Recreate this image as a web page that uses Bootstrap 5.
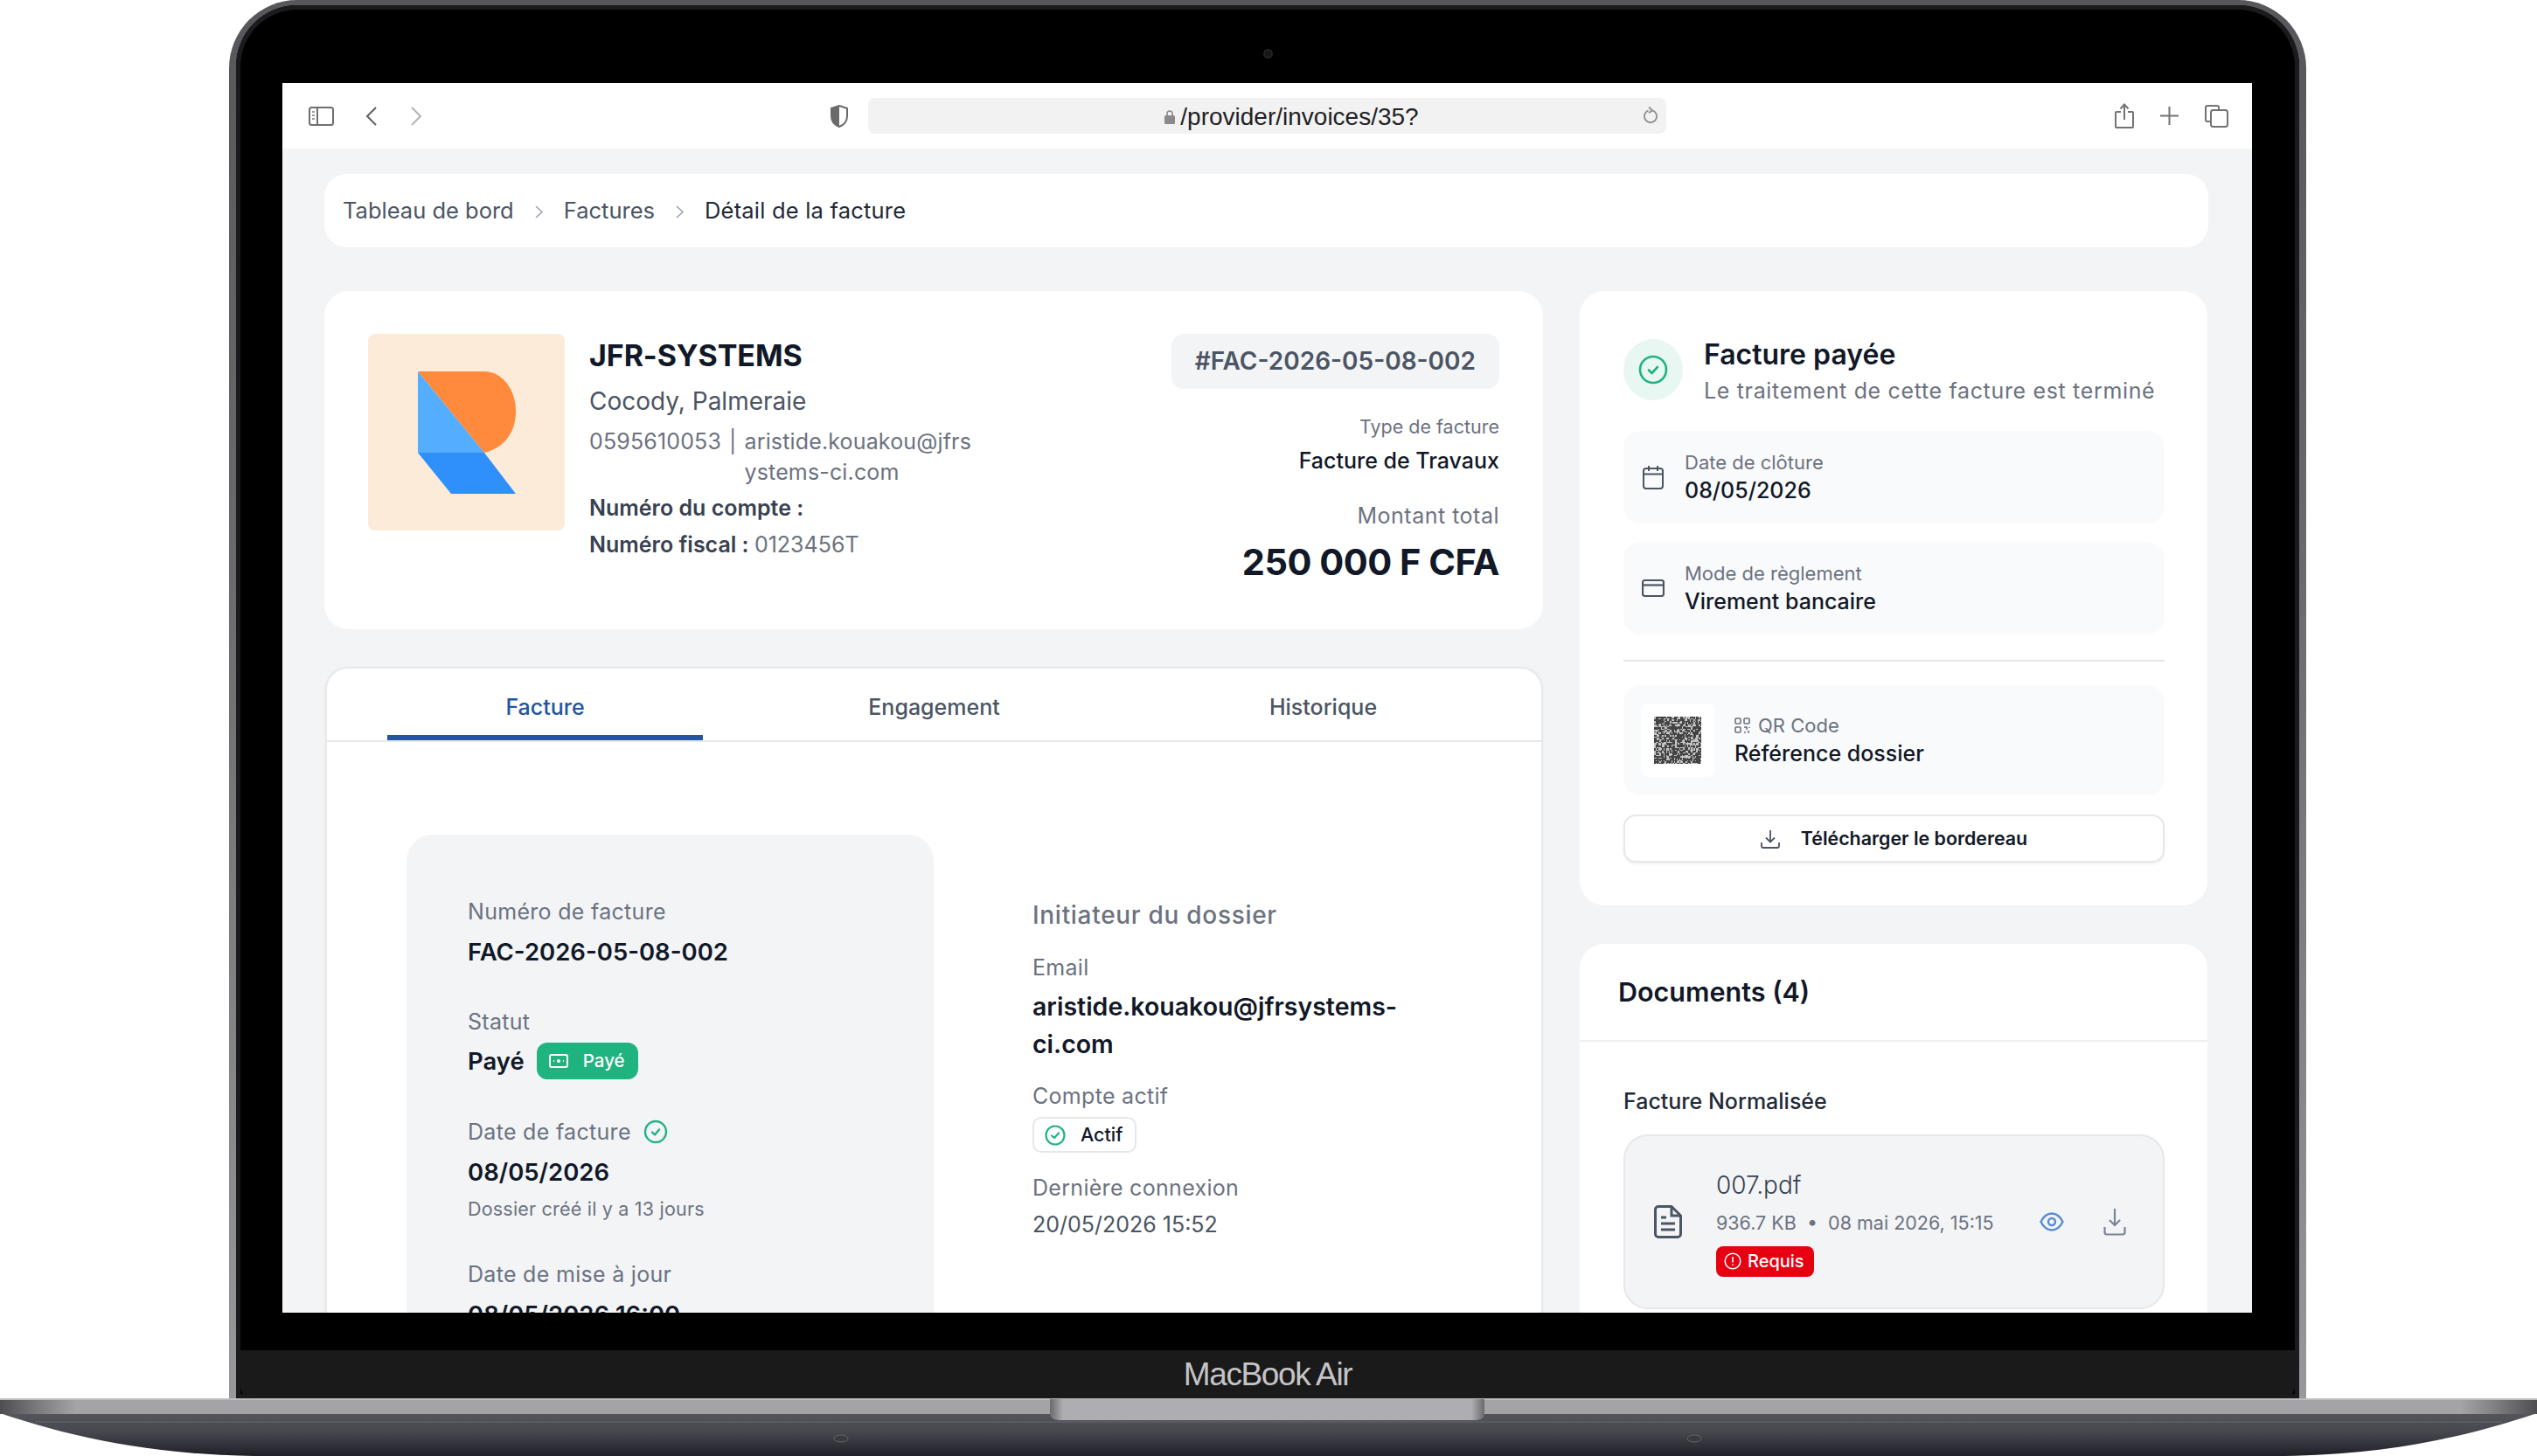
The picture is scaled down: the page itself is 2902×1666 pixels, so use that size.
<!DOCTYPE html>
<html lang="fr">
<head>
<meta charset="utf-8">
<title>Détail de la facture</title>
<link href="https://cdn.jsdelivr.net/npm/bootstrap@5.3.0/dist/css/bootstrap.min.css" rel="stylesheet">
<style>
html,body{margin:0;background:#fff;width:2902px;height:1666px;overflow:hidden}
body{font-family:Inter,"Noto Sans",sans-serif;color:#111827}
svg{display:block;flex:none}
.lid{width:2376px;height:1600px;margin:0 0 0 262px;padding:6px 8px 0;border-radius:78px 78px 0 0;background:linear-gradient(#57575b 0,#6a6a6e 40%,#98989c 100%)}
.lid-in{position:relative;height:1594px;padding:89px 54px 0 53px;border-radius:70px 70px 0 0;background:#000;box-shadow:inset 0 0 0 5px #1b1b1d}
.cam{position:absolute;left:1175px;top:50px;width:11px;height:11px;border-radius:50%;background:#161618;border:2px solid #232326}
.screen{height:1407px;overflow:hidden;background:#f3f4f6}
.bezel{height:43px;background:#000}
.chin{height:55px;margin:0 -49px 0 -48px;background:#1a1a1a;border-radius:0 0 14px 14px;text-align:center;font:37px/56px "Liberation Sans",sans-serif;letter-spacing:-1.4px;color:#c4c4c6}
.base{height:66px}
.tool{height:75px;background:#fff}
.t-left{width:626px;padding-left:30px;gap:36px}
.t-mid{width:957px;gap:22px}
.t-right{width:670px;padding-right:27px;gap:30px}
.url{width:913px;height:41px;padding-left:56px;padding-top:2px;border-radius:8px;background:#f2f2f3;font:28px/41px "Liberation Sans",sans-serif;color:#222;position:relative;gap:6px}
.url svg.rl{position:absolute;right:10px;top:10px}
.pg{padding:29px 50px 0 48px}
.crumb{height:84px;margin-bottom:50px;padding:2px 21px 0;border-radius:26px;background:#fff;border:0;box-shadow:none;font-size:25.5px}
.crumb .breadcrumb{--bs-breadcrumb-margin-bottom:0;--bs-breadcrumb-item-padding-x:23px;--bs-breadcrumb-divider:url("data:image/svg+xml,%3Csvg xmlns='http://www.w3.org/2000/svg' width='11' height='17'%3E%3Cpath d='M2 2l7 6.5L2 15' fill='none' stroke='%239ca3af' stroke-width='1.6'/%3E%3C/svg%3E")}
.crumb a{color:#4b5563;text-decoration:none}
.crumb .active{color:#1f2937;letter-spacing:.2px}
.crumb .breadcrumb-item::before{padding-top:1px}
.cols{gap:42px;align-items:flex-start}
.c-l{width:1394px;flex:none}
.c-r{width:718px;flex:none}
.box{background:#fff;border:0;border-radius:28px}
.hd{height:387px;margin-bottom:43px;padding:49px 50px 0 50px;gap:28px}
.logo{width:225px;height:225px;border-radius:8px;background:#fdebd9;flex:none}
.co{flex:1}
.co-n{font-size:34px;line-height:50px;font-weight:700;color:#111827;letter-spacing:-.1px}
.co-a{font-size:28px;line-height:40px;margin-top:7px;color:#4b5563}
.co-c{font-size:25px;line-height:35px;margin-top:9px;margin-bottom:2px;color:#6b7280;gap:9px;letter-spacing:.15px}
.co-f{font-size:25px;line-height:42px;color:#374151;font-weight:600}
.co-f span{font-weight:400;color:#6b7280}
.ref{display:inline-block;height:63px;padding:0 27px;border-radius:14px;background:#f3f4f6;font-size:28px;line-height:63px;font-weight:600;color:#4b5563}
.k1{font-size:21.500px;line-height:30px;margin-top:28px;color:#6b7280}
.v1{font-size:25px;line-height:30px;margin-top:9px;font-weight:500;color:#111827}
.k2{font-size:25px;line-height:30px;margin-top:33px;color:#6b7280;letter-spacing:.5px}
.amt{font-size:41.500px;line-height:50px;margin-top:13px;font-weight:700;color:#111827;letter-spacing:-.5px}
.tabs-box{margin-left:1px;border:2px solid #e7e9ed;border-bottom:0;border-radius:26px 26px 0 0;height:800px;box-shadow:0 0 3px rgba(0,0,0,.05)}
.tb{height:84px;padding:0 69px;gap:84px;border-bottom:2px solid #e5e7eb;--bs-nav-link-padding-x:0;--bs-nav-link-padding-y:0}
.tb .nav-item{width:361px}
.tb .nav-link{height:82px;line-height:88px;padding:0;text-align:center;font-size:25px;font-weight:500;color:#4b5563;border-bottom:6px solid transparent}
.tb .nav-link.active{color:#2355a0;border-bottom-color:#2355a0;font-weight:500}
.tc{padding:106px 0 0 91px;gap:113px}
.pan{width:603px;height:700px;flex:none;padding:71px 0 0 70px;border-radius:30px;background:#f3f4f6}
.k{font-size:25px;line-height:34px;color:#6b7280;letter-spacing:.3px}
.v{font-size:27.500px;line-height:40px;font-weight:600;color:#111827;margin-top:9px}
.mt43{margin-top:43px}
.pay{height:42px;padding:0 15px 0 14px;border-radius:12px;background:#1fb380;color:#fff;font-size:20.500px;font-weight:500;gap:17px}
.pay-row{margin-top:7px;gap:14px}
.note{font-size:21.500px;line-height:30px;margin-top:7px;color:#6b7280;letter-spacing:.2px}
.ini{flex:1;padding-top:72px}
.ini-t{font-size:28px;line-height:40px;font-weight:500;color:#6b7280;margin-bottom:23px;letter-spacing:.7px}
.em{width:480px;font-size:28.500px;line-height:43px;font-weight:600;color:#111827;margin:6px 0 21px}
.act{display:inline-flex;height:41px;padding:0 14px 0 12px;gap:17px;border:2px solid #e5e7eb;border-radius:10px;background:#fff;color:#111827;font-size:21.500px;font-weight:500;align-items:center;margin:7px 0 23px}
.lc{font-size:25px;line-height:34px;color:#4b5563;margin-top:8px}
.st{padding:55px 49px 49px 50px;margin-bottom:44px}
.st-top{gap:24px;margin-bottom:28px}
.circ{width:68px;height:70px;border-radius:50%;background:#e8f7f1;flex:none}
.st-t{font-size:32px;line-height:36px;font-weight:600;color:#111827}
.st-s{font-size:25px;line-height:36px;margin-top:5px;color:#6b7280;white-space:nowrap;letter-spacing:.66px}
.inf{height:106px;border-radius:20px;background:#f9fafb;padding-left:20px;gap:22px}
.inf-a{margin-bottom:21px}
.ico-w{width:28px;display:flex;justify-content:center}
.il{font-size:22px;line-height:30px;color:#6b7280}
.il-q{gap:9px}
.iv{font-size:25px;line-height:34px;font-weight:500;color:#111827}
.sep{height:2px;margin:29px 0 27px;background:#e5e7eb;opacity:1;border:0}
.qr-b{height:126px;border-radius:20px;background:#f9fafb;padding-left:20px;gap:23px}
.qr-w{width:84px;height:84px;border-radius:8px;background:#fff;flex:none}
.dl{height:55px;width:100%;margin-top:22px;border:2px solid #e5e7eb;border-radius:14px;background:#fff;box-shadow:0 2px 3px rgba(0,0,0,.06);font-size:21.400px;font-weight:600;color:#111827;gap:24px}
.dc-h{height:112px;padding:0 0 0 44px;font-size:30.500px;font-weight:600;color:#111827;border-bottom:2px solid #eceef1;background:transparent;border-radius:28px 28px 0 0}
.dc-b{padding:51px 49px 0 50px;height:400px}
.dc-l{font-size:25px;line-height:34px;font-weight:500;color:#1f2937;margin-bottom:21px}
.doc{height:200px;padding:0 42px 0 33px;border:2px solid #e5e7eb;border-radius:28px;background:#f3f4f6}
.doc-i{margin-right:39px}
.doc-n{font-size:28px;line-height:40px;color:#374151;font-weight:300}
.doc-m{font-size:21.500px;line-height:30px;margin-top:8px;color:#6b7280;white-space:nowrap}
.doc-a{gap:45px}
.req{display:inline-flex;height:35px;margin-top:12px;padding:0 11px 0 9px;gap:7px;border-radius:8px;background:#e60012;color:#fff;font-size:20px;font-weight:500;align-items:center}
.gap-bk{gap:36px}
.fw-chev{margin-left:3px}
.dt-k{gap:14px}
</style>
</head>
<body>
<div class="lid">
  <div class="lid-in">
    <div class="cam"></div>
    <div class="screen">
      <div class="tool d-flex align-items-center">
        <div class="t-left d-flex align-items-center">
          <div class="d-flex align-items-center gap-bk">
            <svg width="29" height="22" viewBox="0 0 29 22" fill="none" stroke="#6f6f72" stroke-width="2"><rect x="1" y="1" width="27" height="20" rx="2.500"/><path d="M10 1v20"/><path d="M4 6h3M4 10h3M4 14h3" stroke="#9a9a9c"/></svg>
            <svg width="13" height="22" viewBox="0 0 13 22" fill="none" stroke="#5f5f62" stroke-width="2"><path d="M12 1L2 11l10 10"/></svg>
          </div>
          <svg class="fw-chev" width="13" height="22" viewBox="0 0 13 22" fill="none" stroke="#b4b4b6" stroke-width="2"><path d="M1 1l10 10L1 21"/></svg>
        </div>
        <div class="t-mid d-flex align-items-center">
          <svg width="22" height="26" viewBox="0 0 22 26"><path d="M11 1l9 3v9c0 6-4 10-9 12C6 23 2 19 2 13V4z" fill="#fff" stroke="#6b6b6e" stroke-width="2"/><path d="M11 1L2 4v9c0 6 4 10 9 12z" fill="#6b6b6e"/></svg>
          <div class="url d-flex align-items-center justify-content-center">
            <svg width="12" height="17" viewBox="0 0 12 17"><path d="M3 7V5a3 3 0 016 0v2" fill="none" stroke="#8a8a8c" stroke-width="1.600"/><rect y="7" width="12" height="10" rx="1.500" fill="#8a8a8c"/></svg>
            <span>/provider/invoices/35?</span>
            <svg class="rl" width="16" height="20" viewBox="0 0 16 20" fill="none" stroke="#8d8d90" stroke-width="1.800"><path d="M5.500 4.500a7 7 0 105 0"/><path d="M6 0.500l4 3.800-4 3"/></svg>
          </div>
        </div>
        <div class="t-right d-flex align-items-center justify-content-end">
          <svg width="22" height="29" viewBox="0 0 22 29" fill="none" stroke="#737376" stroke-width="2"><path d="M7 10H2a1 1 0 00-1 1v16a1 1 0 001 1h18a1 1 0 001-1V11a1 1 0 00-1-1h-5"/><path d="M11 19V2M6.500 6.500L11 1.500l4.500 5"/></svg>
          <svg width="21" height="21" viewBox="0 0 21 21" stroke="#737376" stroke-width="2"><path d="M10.500 0v21M0 10.500h21"/></svg>
          <svg width="27" height="26" viewBox="0 0 27 26" fill="none" stroke="#737376" stroke-width="2"><path d="M6 19H3a2 2 0 01-2-2V3a2 2 0 012-2h11a2 2 0 012 2v3"/><rect x="7" y="6" width="19" height="19" rx="2.500"/></svg>
        </div>
      </div>
      <div class="pg">
        <nav class="crumb d-flex align-items-center" aria-label="breadcrumb">
          <ol class="breadcrumb">
            <li class="breadcrumb-item"><a href="#">Tableau de bord</a></li>
            <li class="breadcrumb-item"><a href="#">Factures</a></li>
            <li class="breadcrumb-item active" aria-current="page">Détail de la facture</li>
          </ol>
        </nav>
        <div class="cols d-flex">
          <div class="c-l">
            <div class="card box hd flex-row">
              <div class="logo d-flex align-items-center justify-content-center">
                <svg width="112" height="140" viewBox="0 0 112 140"><path d="M0 0h76c20 0 36 20 36 46 0 24-14 42-36 47z" fill="#ff8a3c"/><path d="M0 0l76 93H0z" fill="#55adff"/><path d="M0 93h76l36 47H38z" fill="#2f8ffb"/></svg>
              </div>
              <div class="co">
                <div class="co-n">JFR-SYSTEMS</div>
                <div class="co-a">Cocody, Palmeraie</div>
                <div class="co-c d-flex"><span>0595610053</span><span>|</span><span>aristide.kouakou@jfrs<br>ystems-ci.com</span></div>
                <div class="co-f">Numéro du compte :</div>
                <div class="co-f">Numéro fiscal : <span>0123456T</span></div>
              </div>
              <div class="text-end">
                <div class="ref">#FAC-2026-05-08-002</div>
                <div class="k1">Type de facture</div>
                <div class="v1">Facture de Travaux</div>
                <div class="k2">Montant total</div>
                <div class="amt">250 000 F CFA</div>
              </div>
            </div>
            <div class="card box tabs-box">
              <ul class="nav tb flex-nowrap">
                <li class="nav-item"><a class="nav-link active" href="#">Facture</a></li>
                <li class="nav-item"><a class="nav-link" href="#">Engagement</a></li>
                <li class="nav-item"><a class="nav-link" href="#">Historique</a></li>
              </ul>
              <div class="tc d-flex">
                <div class="pan">
                  <div class="k">Numéro de facture</div>
                  <div class="v">FAC-2026-05-08-002</div>
                  <div class="k mt43">Statut</div>
                  <div class="d-flex align-items-center pay-row">
                    <span class="v m-0">Payé</span>
                    <span class="badge pay d-inline-flex align-items-center">
                      <svg width="22" height="18" viewBox="0 0 22 18" fill="none" stroke="#fff" stroke-width="2"><rect x="1" y="2" width="20" height="14" rx="2"/><circle cx="11" cy="9" r="2" fill="#fff" stroke="none"/><path d="M5 9h1M16 9h1"/></svg>
                      Payé
                    </span>
                  </div>
                  <div class="k mt43 d-flex align-items-center dt-k">Date de facture
                    <svg width="28" height="28" viewBox="0 0 28 28" fill="none" stroke="#1fb380" stroke-width="2.400"><circle cx="14" cy="14" r="12"/><path d="M10 14.500l3 3 5-6" stroke-linecap="round" stroke-linejoin="round"/></svg>
                  </div>
                  <div class="v">08/05/2026</div>
                  <div class="note">Dossier créé il y a 13 jours</div>
                  <div class="k mt43">Date de mise à jour</div>
                  <div class="v">08/05/2026 16:00</div>
                </div>
                <div class="ini">
                  <div class="ini-t">Initiateur du dossier</div>
                  <div class="k">Email</div>
                  <div class="em">aristide.kouakou@jfrsystems-ci.com</div>
                  <div class="k">Compte actif</div>
                  <div class="act">
                    <svg width="24" height="24" viewBox="0 0 24 24" fill="none" stroke="#1fb380" stroke-width="2.200"><circle cx="12" cy="12" r="10.500"/><path d="M8 12.500l3 2.500 5-5.500" stroke-linecap="round" stroke-linejoin="round"/></svg>
                    Actif
                  </div>
                  <div class="k">Dernière connexion</div>
                  <div class="lc">20/05/2026 15:52</div>
                </div>
              </div>
            </div>
          </div>
          <div class="c-r">
            <div class="card box st">
              <div class="d-flex st-top">
                <div class="circ d-flex align-items-center justify-content-center">
                  <svg width="34" height="34" viewBox="0 0 34 34" fill="none" stroke="#1fb380" stroke-width="2.600"><circle cx="17" cy="17" r="15"/><path d="M12 17.500l3.500 3.500 6.500-7" stroke-linecap="round" stroke-linejoin="round"/></svg>
                </div>
                <div>
                  <div class="st-t">Facture payée</div>
                  <div class="st-s">Le traitement de cette facture est terminé</div>
                </div>
              </div>
              <div class="inf inf-a d-flex align-items-center">
                <div class="ico-w"><svg width="24" height="28" viewBox="0 0 24 28" fill="none" stroke="#4b5563" stroke-width="2"><rect x="1" y="4" width="22" height="23" rx="3"/><path d="M1 10.500h22M7 1v6M17 1v6"/></svg></div>
                <div><div class="il">Date de clôture</div><div class="iv">08/05/2026</div></div>
              </div>
              <div class="inf d-flex align-items-center">
                <div class="ico-w"><svg width="26" height="20" viewBox="0 0 26 20" fill="none" stroke="#4b5563" stroke-width="2.200"><rect x="1" y="1" width="24" height="18" rx="2.500"/><path d="M1 6.500h24"/></svg></div>
                <div><div class="il">Mode de règlement</div><div class="iv">Virement bancaire</div></div>
              </div>
              <hr class="sep">
              <div class="qr-b d-flex align-items-center">
                <div class="qr-w d-flex align-items-center justify-content-center">
                  <svg id="qr" width="54" height="54" viewBox="0 0 54 54" shape-rendering="crispEdges"></svg>
                </div>
                <div>
                  <div class="il d-flex align-items-center il-q">
                    <svg width="18" height="18" viewBox="0 0 18 18" fill="none" stroke="#6b7280" stroke-width="1.600"><rect x="1" y="1" width="6" height="6" rx="1"/><rect x="11" y="1" width="6" height="6" rx="1"/><rect x="1" y="11" width="6" height="6" rx="1"/><path d="M11 11h3v3M17 11v1M11 17h2M16 15v2h1"/></svg>
                    QR Code
                  </div>
                  <div class="iv">Référence dossier</div>
                </div>
              </div>
              <button type="button" class="btn dl d-flex align-items-center justify-content-center p-0">
                <svg width="22" height="22" viewBox="0 0 22 22" fill="none" stroke="#4b5563" stroke-width="1.800"><path d="M11 1v13M6 9.500l5 5 5-5"/><path d="M1 15v4a2 2 0 002 2h16a2 2 0 002-2v-4"/></svg>
                Télécharger le bordereau
              </button>
            </div>
            <div class="card box">
              <div class="card-header dc-h d-flex align-items-center">Documents (4)</div>
              <div class="dc-b">
                <div class="dc-l">Facture Normalisée</div>
                <div class="doc d-flex align-items-center">
                  <svg class="doc-i" width="32" height="38" viewBox="0 0 32 38" fill="none" stroke="#4b5563" stroke-width="3"><path d="M20 1.500H5a3.500 3.500 0 00-3.500 3.500v28A3.500 3.500 0 005 36.500h22a3.500 3.500 0 003.500-3.500V12z" stroke-linejoin="round"/><path d="M20 2v10h10M8 14h6M8 21h16M8 28h16"/></svg>
                  <div>
                    <div class="doc-n">007.pdf</div>
                    <div class="doc-m">936.7 KB &nbsp;•&nbsp; 08 mai 2026, 15:15</div>
                    <div class="req">
                      <svg width="20" height="20" viewBox="0 0 20 20" fill="none" stroke="#fff" stroke-width="1.600"><circle cx="10" cy="10" r="8.800"/><path d="M10 5v6.500M10 13.500v1.500"/></svg>
                      Requis
                    </div>
                  </div>
                  <div class="ms-auto d-flex align-items-center doc-a">
                    <svg width="28" height="22" viewBox="0 0 28 22" fill="none" stroke="#5b8bd0" stroke-width="2.400"><path d="M1.500 11C5 4 9 1.500 14 1.500S23 4 26.500 11C23 18 19 20.500 14 20.500S5 18 1.500 11z" stroke-linejoin="round"/><circle cx="14" cy="11" r="4"/></svg>
                    <svg width="26" height="32" viewBox="0 0 26 32" fill="none" stroke="#7b8494" stroke-width="2.200"><path d="M13 1v19M7 14l6 6 6-6"/><path d="M1.500 22v6a2.500 2.500 0 002.500 2.500h18a2.500 2.500 0 002.500-2.500v-6"/></svg>
                  </div>
                </div>
              </div>
            </div>
          </div>
        </div>
      </div>
    </div>
    <div class="bezel"></div>
    <div class="chin">MacBook Air</div>
  </div>
</div>
<div class="base">
  <svg width="2902" height="66" viewBox="0 0 2902 66">
    <defs>
      <linearGradient id="bd" x1="0" y1="0" x2="0" y2="1"><stop offset="0" stop-color="#55565c"/><stop offset=".45" stop-color="#46474e"/><stop offset="1" stop-color="#1f2027"/></linearGradient>
      <linearGradient id="st" x1="0" y1="0" x2="1" y2="0"><stop offset="0" stop-color="#4e4e52"/><stop offset=".016" stop-color="#7e7e82"/><stop offset=".03" stop-color="#a4a4a8"/><stop offset=".97" stop-color="#a4a4a8"/><stop offset=".984" stop-color="#7e7e82"/><stop offset="1" stop-color="#4e4e52"/></linearGradient>
      <linearGradient id="no" x1="0" y1="0" x2="1" y2="0"><stop offset="0" stop-color="#6a6a6e"/><stop offset=".03" stop-color="#aeaeb2"/><stop offset=".97" stop-color="#aeaeb2"/><stop offset="1" stop-color="#6a6a6e"/></linearGradient>
    </defs>
    <path d="M0 17H2902C2822 44 2732 64 2612 66H290C170 64 80 44 0 17z" fill="url(#bd)"/>
    <rect y="1" width="2902" height="17" fill="url(#st)"/>
    <rect y="0" width="2902" height="2" fill="#bdbdc0"/>
    <path d="M40 27H2862" stroke="#67686e" stroke-width="1"/>
    <path d="M1201 1H1698V17C1698 22 1694 25 1688 25H1211C1205 25 1201 22 1201 17z" fill="url(#no)"/>
    <ellipse cx="962" cy="46" rx="8" ry="4" fill="#3a3b41" stroke="#63646a"/>
    <ellipse cx="1938" cy="46" rx="8" ry="4" fill="#3a3b41" stroke="#63646a"/>
  </svg>
</div>
<script src="https://cdn.jsdelivr.net/npm/bootstrap@5.3.0/dist/js/bootstrap.bundle.min.js"></script>
<script>
(function(){var s=document.getElementById('qr'),h='',x=12345;
for(var i=0;i<36;i++){for(var j=0;j<36;j++){x=(x*1103515245+12345)&2147483647;
h+='<rect x="'+i*1.5+'" y="'+j*1.5+'" width="1.6" height="1.6" fill="'+((x>>16)%5<3?'#444':'#c4c4c4')+'"/>';}}
s.innerHTML=h;})();
</script>
</body>
</html>
